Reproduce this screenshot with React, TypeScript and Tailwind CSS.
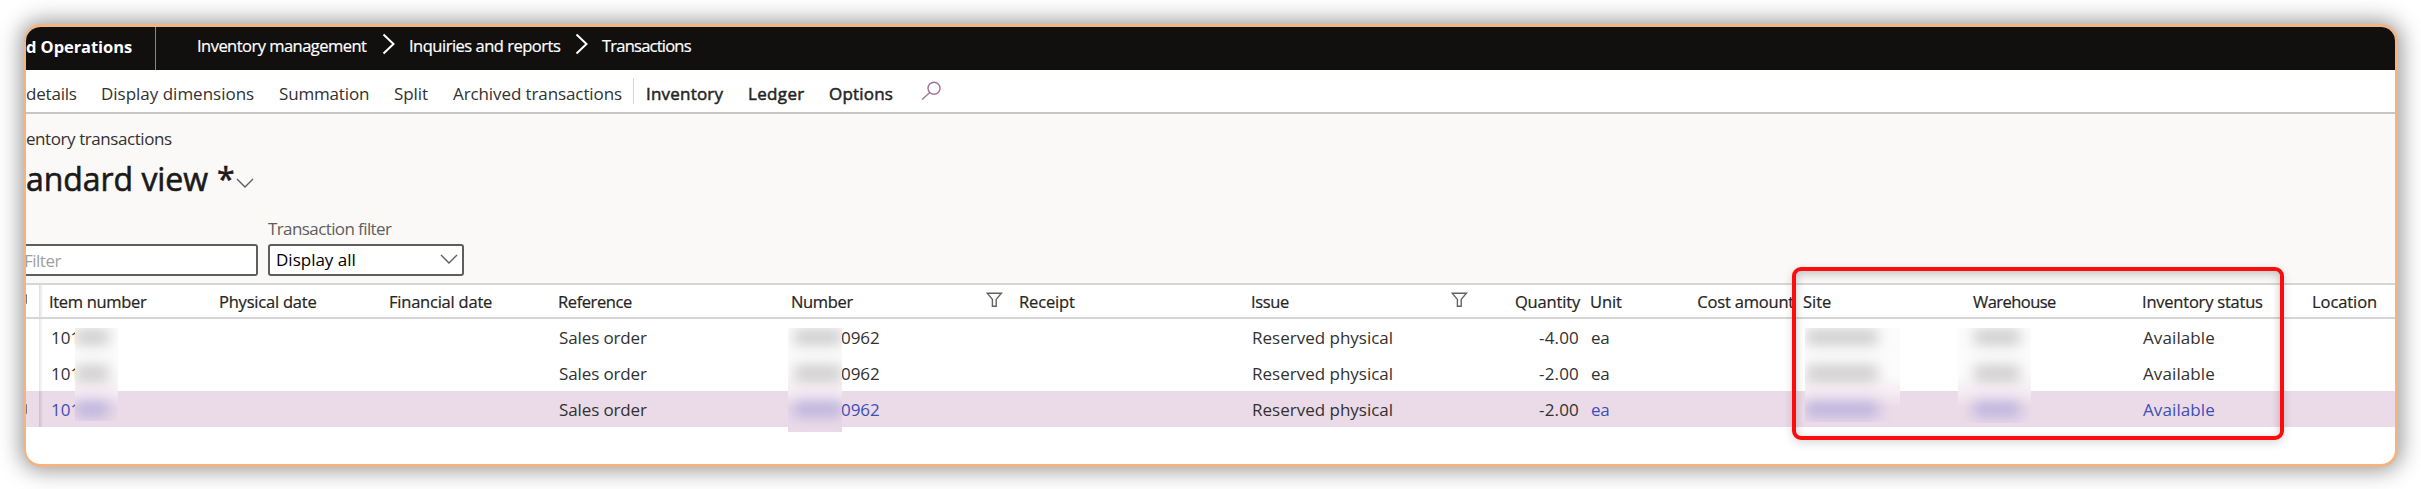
import React from 'react';

type Cell = { text: string; cls: string };

const breadcrumbs = [
  { text: 'Inventory management', cls: 'w-[212px] tracking-[-0.53px]', sep: true },
  { text: 'Inquiries and reports', cls: 'w-[193px] tracking-[-0.49px]', sep: true },
  { text: 'Transactions', cls: 'w-[120px] tracking-[-0.77px]', sep: false },
];

const actions: Cell[] = [
  { text: 'details', cls: 'w-[75px] tracking-[-0.2px]' },
  { text: 'Display dimensions', cls: 'w-[178px] tracking-[-0.01px]' },
  { text: 'Summation', cls: 'w-[115px] tracking-[-0.16px]' },
  { text: 'Split', cls: 'w-[59px] tracking-[-0.08px]' },
  { text: 'Archived transactions', cls: 'w-[180px] tracking-[-0.1px]' },
];

const menus: Cell[] = [
  { text: 'Inventory', cls: 'w-[102px] tracking-[0.2px]' },
  { text: 'Ledger', cls: 'w-[81px] tracking-[0.35px]' },
  { text: 'Options', cls: 'w-[92px] tracking-[0.2px]' },
];

const rows = [
  { qty: '-4.00', selected: false },
  { qty: '-2.00', selected: false },
  { qty: '-2.00', selected: true },
];

function Funnel() {
  return (
    <svg width="17" height="16" viewBox="0 0 17 16" fill="none" stroke="#66625f" strokeWidth="1.4" className="mb-[5px] shrink-0">
      <path d="M1.2 1.2H15.4L10.2 7.4V14.3H6.4V7.4Z" />
    </svg>
  );
}

function ChevronDown({ className }: { className: string }) {
  return (
    <svg width="18" height="11" viewBox="0 0 18 11" fill="none" stroke="#605e5c" strokeWidth="1.4" className={className}>
      <path d="M1 1L9 9L17 1" />
    </svg>
  );
}

function Blob({ selected, className }: { selected: boolean; className: string }) {
  return (
    <div className="flex h-9 shrink-0 items-center">
      <div className={`h-[16px] blur-[7px] ${selected ? 'bg-[#5560c8]/32' : 'bg-black/19'} ${className}`} />
    </div>
  );
}

function Redaction({ className, blob }: { className: string; blob: string }) {
  return (
    <div className={`absolute top-[9px] overflow-hidden bg-linear-to-b from-[#fcfcfc] from-[46px] via-[#f5edf3] via-[64px] to-[#ebdae8] to-[80px] ${className}`}>
      <div className="-mt-[9px] flex flex-col">
        {rows.map((r, i) => (
          <Blob key={i} selected={r.selected} className={blob} />
        ))}
      </div>
    </div>
  );
}

function TopBar() {
  return (
    <div className="flex h-[43px] shrink-0 bg-[#11100f] text-[16.5px] text-white">
      <div className="w-[130px] shrink-0 border-r border-[#8a8886] font-bold leading-[40px] tracking-[-0.07px]">d Operations</div>
      <nav className="flex pl-[41px] font-medium leading-[37px] [-webkit-text-stroke:0.2px]">
        {breadcrumbs.map((b) => (
          <div key={b.text} className={`flex shrink-0 justify-between whitespace-nowrap ${b.cls}`}>
            {b.text}
            {b.sep && (
              <svg width="14" height="22" viewBox="0 0 14 22" fill="none" stroke="#fff" strokeWidth="2" className="mr-[13px] mt-[6px] shrink-0">
                <path d="M1.5 1.5L11.5 11L1.5 20.5" />
              </svg>
            )}
          </div>
        ))}
      </nav>
    </div>
  );
}

function ActionBar() {
  return (
    <div className="flex h-[44px] shrink-0 border-b-2 border-[#c8c6c4] bg-white text-[17px] leading-[48px] text-[#323130]">
      {actions.map((a) => (
        <div key={a.text} className={`h-10 shrink-0 whitespace-nowrap ${a.cls}`}>{a.text}</div>
      ))}
      <div className="mt-[8px] h-[26px] w-px bg-[#d8d6d4]" />
      <div className="flex h-10 pl-[12px] font-medium text-[#252423] [-webkit-text-stroke:0.5px]">
        {menus.map((m) => (
          <div key={m.text} className={`shrink-0 ${m.cls}`}>{m.text}</div>
        ))}
      </div>
      <svg width="21" height="20" viewBox="0 0 21 20" fill="none" stroke="#a0709c" strokeWidth="1.4" className="mt-[11px]">
        <circle cx="13" cy="7.3" r="6" />
        <path d="M8.8 11.6L1 18.6" />
      </svg>
    </div>
  );
}

function ViewHeader() {
  return (
    <div className="flex h-[169px] shrink-0 flex-col bg-[#faf9f8] text-[17px] text-[#323130]">
      <div className="mt-[12px] h-[26px] leading-[26px] tracking-[-0.43px]">entory transactions</div>
      <div className="mt-[6px] flex h-[44px] text-[32px] font-medium leading-[42px] tracking-[-0.05px] text-[#1b1a19] [-webkit-text-stroke:0.6px]">
        andard view
        <span className="ml-[9px] w-[15px]">*</span>
        <ChevronDown className="ml-[4px] mt-[20px]" />
      </div>
      <div className="mt-[13px] flex">
        <div className="mt-[29px] h-[32px] w-[232px] rounded-r-[3px] border-2 border-l-0 border-[#605e5c] bg-white leading-[30px] tracking-[-0.5px] text-[#a19f9d]">
          <span className="-ml-[2px]">Filter</span>
        </div>
        <div className="ml-[10px] w-[196px]">
          <div className="h-[29px] leading-[27px] tracking-[-0.6px] text-[#605e5c]">Transaction filter</div>
          <div className="flex h-[32px] justify-between rounded-[3px] border-2 border-[#605e5c] bg-white pl-[6px] leading-[27px] text-black">
            Display all
            <ChevronDown className="mr-[4px] mt-[8px]" />
          </div>
        </div>
      </div>
    </div>
  );
}

function GridHeader() {
  return (
    <div className="flex h-[36px] shrink-0 items-center whitespace-nowrap border-y-2 border-[#d6d6d6] bg-white text-[16.5px] font-medium leading-[24px] text-[#252423] [-webkit-text-stroke:0.2px]">
      <div className="flex h-full w-[23px] shrink-0 items-center">
        <div className="mb-1 h-[10px] w-px rounded-r bg-[#777]" />
        <div className="ml-[12px] h-full w-[4px] bg-linear-to-r from-[#dcdcdc] to-white" />
      </div>
      <div className="w-[170px] pt-[2px] tracking-[-0.32px]">Item number</div>
      <div className="w-[170px] pt-[2px] tracking-[-0.21px]">Physical date</div>
      <div className="w-[169px] pt-[2px] tracking-[-0.22px]">Financial date</div>
      <div className="w-[233px] pt-[2px] tracking-[-0.41px]">Reference</div>
      <div className="flex w-[228px] items-center justify-between pr-[16px] pt-[2px] tracking-[-0.34px]">Number<Funnel /></div>
      <div className="w-[232px] pt-[2px] tracking-[-0.15px]">Receipt</div>
      <div className="flex w-[239px] items-center justify-between pr-[22px] pt-[2px] tracking-[-0.36px]">Issue<Funnel /></div>
      <div className="w-[100px] pr-[10px] pt-[2px] text-right tracking-[-0.17px]">Quantity</div>
      <div className="w-[70px] pt-[2px] tracking-[-0.1px]">Unit</div>
      <div className="w-[143px] pr-[9px] pt-[2px] text-right tracking-[-0.2px]">Cost amount</div>
      <div className="w-[170px] pt-[2px] tracking-[-0.03px]">Site</div>
      <div className="w-[169px] pt-[2px] tracking-[-0.55px]">Warehouse</div>
      <div className="w-[170px] pt-[2px] tracking-[-0.22px]">Inventory status</div>
      <div className="pt-[2px] tracking-[-0.08px]">Location</div>
    </div>
  );
}

function GridRow({ qty, selected }: { qty: string; selected: boolean }) {
  const link = selected ? 'text-[#3c50b4]' : '';
  return (
    <div className={`flex h-9 items-center whitespace-nowrap text-[17px] leading-[24px] text-[#323130] ${selected ? 'bg-[#ebdae8]' : 'bg-white'}`}>
      <div className="flex h-full w-[23px] shrink-0 items-center">
        <div className={`h-[10px] w-px rounded-r ${selected ? 'bg-[#777]' : ''}`} />
        <div className={`ml-[12px] h-full w-[4px] bg-linear-to-r ${selected ? 'from-[#cdbccb] to-[#ebdae8]' : 'from-[#e6e6e6] to-white'}`} />
      </div>
      <div className={`w-[509px] pl-[2px] pt-[2px] ${link}`}>101</div>
      <div className="w-[232px] pl-[1px] pt-[2px] tracking-[-0.12px]">Sales order</div>
      <div className={`w-[460px] pl-[51px] pt-[2px] tracking-[-0.05px] ${link}`}>0962</div>
      <div className="w-[240px] pl-[2px] pt-[2px]">Reserved physical</div>
      <div className="w-[100px] pr-[11px] pt-[2px] text-right tracking-[0.16px]">{qty}</div>
      <div className={`w-[552px] pl-[1px] pt-[2px] tracking-[-0.3px] ${link}`}>ea</div>
      <div className={`pl-[1px] pt-[2px] tracking-[0.1px] ${link}`}>Available</div>
    </div>
  );
}

export default function App() {
  return (
    <div className="h-[489px] w-[2421px] overflow-hidden bg-white pl-6 pt-6 font-['Open_Sans',sans-serif]">
      <div className="flex h-[443px] w-[2374px] flex-col overflow-hidden rounded-[17px] border-3 border-l-2 border-[#f3b482] bg-white shadow-[0_0_22px_3px_rgba(0,0,0,0.42)]">
        <TopBar />
        <ActionBar />
        <ViewHeader />
        <GridHeader />
        <div className="relative h-[108px] shrink-0">
          {rows.map((r, i) => (
            <GridRow key={i} {...r} />
          ))}
          <Redaction className="left-[49px] h-[93px] w-[43px]" blob="w-[34px]" />
          <Redaction className="left-[762px] h-[104px] w-[54px]" blob="ml-[6px] w-[48px]" />
          <Redaction className="left-[1779px] h-[94px] w-[95px]" blob="ml-[1px] w-[72px]" />
          <Redaction className="left-[1932px] h-[95px] w-[73px]" blob="ml-[16px] w-[46px]" />
          <div className="absolute -top-[52px] left-[1766px] h-[173px] w-[492px] rounded-[9px] border-4 border-[#fb0d0d] shadow-[0_3px_10px_rgba(0,0,0,0.15),inset_0_3px_10px_rgba(0,0,0,0.22)]" />
        </div>
      </div>
    </div>
  );
}
